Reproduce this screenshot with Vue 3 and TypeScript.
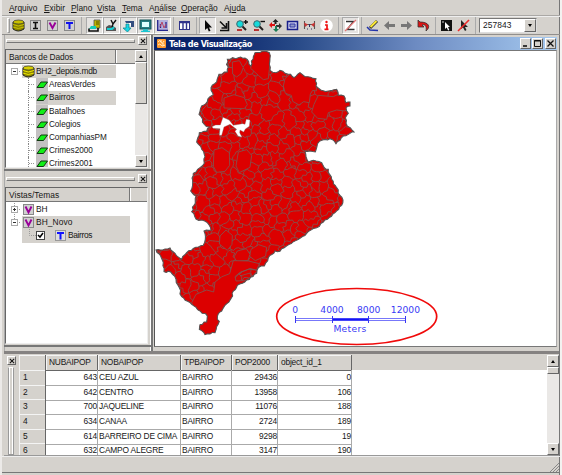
<script setup lang="ts">
type Pt = [number, number]

const menus = [
  ['', 'A', 'rquivo'], ['', 'E', 'xibir'], ['', 'P', 'lano'], ['', 'V', 'ista'],
  ['', 'T', 'ema'], ['A', 'n', 'álise'], ['', 'O', 'peração'], ['Aj', 'u', 'da'],
]
const groups: string[][] = [
  ['db', 'box-I', 'box-V', 'box-T'],
  ['import', 'themeedit', 'drop', 'monitor', 'chart'],
  ['table'],
  ['cursor', 'resize', 'zoomin', 'zoomout', 'pan', 'extent', 'distance', 'info'],
  ['nozoom'],
  ['pencil', 'left', 'right', 'undo'],
  ['select', 'unselect'],
]
const pressed = ['import', 'themeedit', 'drop', 'monitor', 'chart', 'cursor', 'nozoom']
const letterColor: Record<string, string> = { I: '#111', V: '#909', T: '#11e' }

const layers = ['AreasVerdes', 'Bairros', 'Batalhoes', 'Colegios', 'CompanhiasPM', 'Crimes2000', 'Crimes2001']
const columns = ['NUBAIPOP', 'NOBAIPOP', 'TPBAIPOP', 'POP2000', 'object_id_1']
const records: (string | number)[][] = [
  [643, 'CEU AZUL', 'BAIRRO', 29436, 0],
  [642, 'CENTRO', 'BAIRRO', 13958, 106],
  [700, 'JAQUELINE', 'BAIRRO', 11076, 188],
  [634, 'CANAA', 'BAIRRO', 2724, 189],
  [614, 'BARREIRO DE CIMA', 'BAIRRO', 9298, 19],
  [632, 'CAMPO ALEGRE', 'BAIRRO', 3147, 190],
]

// City boundary, three units per screen pixel
const outline: Pt[] = [
  [315, 50], [345, 45], [358, 50], [358, 85], [360, 103], [378, 110], [390, 103], [405, 112], [422, 115], [432, 125], [450, 110], [465, 122], [498, 128], [498, 150], [512, 162], [535, 165], [560, 160], [565, 178], [582, 180], [588, 200], [600, 198], [600, 210], [588, 215], [595, 232], [586, 245], [588, 262], [612, 288], [600, 292], [580, 300], [558, 323], [540, 308], [508, 316], [496, 348], [465, 346], [475, 378], [490, 373], [515, 380], [523, 395], [535, 400], [545, 430], [560, 455],
  [570, 478], [579, 492], [575, 508], [555, 530], [520, 558], [500, 575], [470, 592], [430, 617], [395, 638], [390, 646], [375, 645], [355, 665], [343, 690], [325, 695], [320, 712], [290, 732], [262, 748], [250, 765], [248, 780], [225, 808], [215, 825], [205, 833], [202, 850], [208, 856], [200, 872], [195, 890], [165, 896], [148, 880], [150, 866], [170, 858], [172, 840], [150, 825], [125, 805], [95, 782], [88, 755], [78, 730], [62, 708], [42, 707], [40, 680], [32, 660], [18, 642], [38, 642], [60, 636], [75, 652], [95, 670], [110, 650], [130, 637], [160, 628], [166, 610], [162, 585], [183, 583], [172, 560], [138, 549], [125, 527], [132, 508], [138, 480], [122, 465], [128, 440], [130, 412], [150, 395], [163, 382], [165, 362], [155, 340], [140, 318], [148, 290], [170, 286], [178, 273], [163, 265], [147, 235], [155, 210], [172, 197], [180, 182], [190, 176], [183, 155], [200, 138], [207, 115], [232, 108], [232, 70], [265, 65], [285, 66], [303, 90], [310, 62],
]
const lagoon = 'M186 272 197 267 211 267 219 244 237 252 250 268 278 263 285 265 289 250 300 252 298 271 286 279 281 288 270 282 269 290 276 304 264 300 255 286 260 280 240 265 222 273 215 298 208 298 210 278 189 277Z'
// Districts much larger than their neighbours
const large = [
  'M405 128 435 100 500 115 499 165 488 163 481 174 478 200 461 197 447 207 428 196 424 178 406 172 400 150Z',
  'M308 40 365 40 358 100 355 128 340 131 325 118 302 97Z',
  'M247 78 268 74 280 95 273 113 260 123 248 114Z',
  'M505 178 550 182 575 170 610 200 585 225 560 222 535 230 530 250 503 247 485 228 492 205Z',
  'M222 186 252 176 283 185 292 206 283 218 222 216Z',
  'M192 342 216 335 238 350 239 388 225 406 200 409 190 391Z',
  'M265 348 290 341 305 358 300 394 268 410 258 390Z',
  'M210 600 228 582 247 598 246 625 232 643 208 624Z',
  'M303 640 326 626 350 634 347 660 316 674 299 661Z',
  'M262 645 289 638 300 655 294 673 260 676 252 663Z',
  'M250 674 295 675 328 683 320 702 300 698 270 709 255 722 258 735 285 734 300 725 275 780 225 900 140 910 145 850 125 800 138 775 170 762 191 768 195 738 216 722 239 713Z',
]

function noise(x: number, y: number): number {
  const v = Math.sin(x * 12.9898 + y * 78.233) * 43758.5453
  return v - Math.floor(v)
}
function order(a: Pt, b: Pt): boolean {
  return a[0] < b[0] || (a[0] === b[0] && a[1] < b[1])
}
function rough(a: Pt, b: Pt, amount: number): string {
  const flip = !order(a, b)
  const [p, q] = flip ? [b, a] : [a, b]
  const len = Math.hypot(q[0] - p[0], q[1] - p[1])
  const n = Math.max(1, Math.round(len / 8))
  const out: string[] = []
  for (let i = 1; i < n; i++) {
    const t = i / n
    const x = p[0] + (q[0] - p[0]) * t
    const y = p[1] + (q[1] - p[1]) * t
    const k = (noise(Math.round(x), Math.round(y)) - 0.5) * amount
    out.push(`${(x - ((q[1] - p[1]) / len) * k).toFixed(1)} ${(y + ((q[0] - p[0]) / len) * k).toFixed(1)}`)
  }
  if (flip) out.reverse()
  return out.join(' ')
}
const border = 'M' + outline.map((p, i) => `${p.join(' ')} ${rough(p, outline[(i + 1) % outline.length], 6)}`).join(' ') + 'Z'

function seeds(): Pt[] {
  const pts: Pt[] = []
  for (let gy = 0; gy < 34; gy++) {
    for (let gx = 0; gx < 22; gx++) {
      const px = 5 + gx * 30 + noise(gx + 1, gy + 3) * 29
      const py = 40 + gy * 26 + noise(gx + 7, gy + 11) * 25
      const sparse = py < 240 ? 0.3 : py > 620 ? 0.15 : 0.06
      if (noise(gx + 31, gy + 17) < sparse) continue
      pts.push([px, py])
    }
  }
  return pts
}
function districts(): string {
  const pts = seeds()
  let d = ''
  for (const s of pts) {
    let cell: Pt[] = [[-50, -50], [700, -50], [700, 950], [-50, 950]]
    for (const o of pts) {
      if (o === s) continue
      const nx = o[0] - s[0]
      const ny = o[1] - s[1]
      const c = (nx * (o[0] + s[0]) + ny * (o[1] + s[1])) / 2
      const next: Pt[] = []
      cell.forEach((a, i) => {
        const b = cell[(i + 1) % cell.length]
        const da = a[0] * nx + a[1] * ny - c
        const db = b[0] * nx + b[1] * ny - c
        if (da <= 0) next.push(a)
        if (da * db < 0) {
          const t = da / (da - db)
          next.push([a[0] + (b[0] - a[0]) * t, a[1] + (b[1] - a[1]) * t])
        }
      })
      cell = next
    }
    cell.forEach((a, i) => {
      const b = cell[(i + 1) % cell.length]
      if (order(a, b)) d += `M${a[0].toFixed(1)} ${a[1].toFixed(1)} ${rough(a, b, 12)} ${b[0].toFixed(1)} ${b[1].toFixed(1)}`
    })
  }
  return d
}
const boundaries = districts()
const bars = [0, 4000, 8000, 12000]
</script>

<template>
  <div class="app">
    <nav class="menu">
      <span v-for="m in menus" :key="m.join('')">{{ m[0] }}<u>{{ m[1] }}</u>{{ m[2] }}</span>
    </nav>

    <div class="toolbar">
      <i class="handle"></i>
      <div v-for="(g, gi) in groups" :key="gi" class="group" :class="'g' + gi">
        <span v-for="n in g" :key="n" class="tool" :class="{ pressed: pressed.includes(n) }">
          <svg viewBox="0 0 13 13" width="13" height="13">
            <g v-if="n === 'db'">
              <path d="M1 3v7q5 4 11 0V3z" fill="#8b8500" stroke="#222" />
              <ellipse cx="6.5" cy="3" rx="5.3" ry="2" fill="#c8c000" stroke="#333" stroke-width=".7" />
              <path d="M1 5.5q5 3 11 0M1 8q5 3 11 0" stroke="#c9c100" fill="none" />
            </g>
            <g v-else-if="n.startsWith('box-')">
              <rect x="1.5" y="1.5" width="10" height="10" fill="#d0d0d0" stroke="#888" />
              <path v-if="n === 'box-I'" d="M4 3.5h5M6.5 3.5v6M4 9.5h5" :stroke="letterColor.I" stroke-width="1.6" fill="none" />
              <path v-else-if="n === 'box-V'" d="M3.5 3.5 6.5 9 9.5 3.5" :stroke="letterColor.V" stroke-width="1.9" fill="none" />
              <path v-else d="M3 4h7M6.5 4v6" :stroke="letterColor.T" stroke-width="2" fill="none" />
            </g>
            <g v-else-if="n === 'import'">
              <path d="M6 1h6v8H6z" fill="#bdb500" stroke="#555" stroke-width=".8" /><path d="M8 3h3M8 5h3" stroke="#554f00" />
              <path d="M3 7h5v3H1z" fill="#16cdb8" /><path d="M1 9.5V12h9V9" stroke="#111" stroke-width="1.6" fill="none" />
            </g>
            <g v-else-if="n === 'themeedit'">
              <path d="M1 8l3-2 4 1 3 2v3H1z" fill="#555" /><path d="M2 10h5l2-2" stroke="#16cdd0" stroke-width="2" fill="none" />
              <path d="M6 1l2 4 3-4M8 5l-1 3" stroke="#111" stroke-width="1.4" fill="none" />
            </g>
            <g v-else-if="n === 'drop'">
              <path d="M3 2h9v6H9V4H4z" fill="#334f80" /><path d="M5 4h4v3H5z" fill="#fff" /><path d="M4 5h3v4h2l-3.500 4L1 9h3z" fill="#19d5e5" stroke="#07818b" stroke-width=".7" />
            </g>
            <g v-else-if="n === 'monitor'">
              <rect x="1" y="1" width="11" height="9" fill="#267f83" stroke="#145557" /><rect x="3" y="3" width="7" height="5" fill="#dff" /><path d="M4 11h5M2 12.500h9" stroke="#1dc5d0" stroke-width="1.5" />
            </g>
            <g v-else-if="n === 'chart'">
              <rect x="1" y="1" width="11" height="11" fill="#b2b2dc" /><path d="M1.700 1v10.300H12M4.500 9V5M10 9V3" stroke="#25258d" stroke-width="1.3" fill="none" /><path d="M4 8l2-5 2 6 2-4" stroke="#b64666" fill="none" />
            </g>
            <g v-else-if="n === 'table'">
              <rect x="1.500" y="2.500" width="10" height="8" fill="#fff" stroke="#30348b" /><path d="M1 3.500h11M5 3v8M8.500 3v8" stroke="#30348b" stroke-width="1.4" />
            </g>
            <path v-else-if="n === 'cursor'" d="M4 1v10l2.300-2 1.500 3.500 1.700-.7L8 8.500h3z" fill="#080808" />
            <path v-else-if="n === 'resize'" d="M2 2.500l7 7M10.500 2v9.500H2M8.500 4v5h-5" stroke="#111" stroke-width="1.600" fill="none" />
            <g v-else-if="n === 'zoomin' || n === 'zoomout'">
              <path d="M7 7l4 4" stroke="#222" stroke-width="2" /><circle cx="5" cy="5" r="3.300" fill="#16dada" stroke="#39676d" /><path d="M2 11h5" stroke="#b52222" stroke-width="1.800" />
              <path :d="n === 'zoomin' ? 'M8.500 3H13M10.700 1v4' : 'M8.500 2.500H13'" stroke="#111" stroke-width="1.400" />
            </g>
            <g v-else-if="n === 'pan'">
              <path d="M6.500 0l3 3H7.500v2h-2V3h-2z" fill="#222" /><path d="M0 6l3-3v2h3v2H3v2z" fill="#d11" /><path d="M13 7l-3-3v2H7v2h3v2z" fill="#333" /><path d="M7 13l-3-3h2V7h2v3h2z" fill="#187c55" />
            </g>
            <g v-else-if="n === 'extent'"><rect x="1.500" y="2.500" width="10" height="8" fill="#c7cae9" stroke="#181f8b" stroke-width="1.500" /><path d="M4 5h5v3H4z" stroke="#3037a6" fill="#929ac7" /></g>
            <g v-else-if="n === 'distance'"><path d="M1.500 2v8M11.500 2v8M2 5.500h9" stroke="#555" stroke-width="1.100" /><path d="M1 3.500l4 2-3 2.500zM12 3.500l-4 2 3 2.500z" fill="#c33" /><path d="M6.500 5v3M4 10h1M8 10h1" stroke="#336" /></g>
            <g v-else-if="n === 'info'"><circle cx="6.500" cy="6.500" r="6.300" fill="#fff" /><path d="M5 6h2v4M4.500 10.300h4" stroke="#e11" stroke-width="1.700" fill="none" /><circle cx="6.500" cy="3" r="1.200" fill="#e11" /></g>
            <g v-else-if="n === 'nozoom'"><rect x="1" y="1" width="11" height="11" fill="#fff" /><path d="M2 2.500h7.500L3 10.500h7.500" stroke="#333" fill="none" stroke-width="1.300" /><path d="M12 1L1 12" stroke="#e47777" stroke-width="1.300" /></g>
            <g v-else-if="n === 'pencil'"><path d="M1 8l3 3 8 .500" stroke="#2233aa" fill="none" stroke-width="1.500" /><path d="M4 9l7-7" stroke="#333" stroke-width="3" /><path d="M4.500 8l6-6" stroke="#fbe831" stroke-width="2" /></g>
            <path v-else-if="n === 'left'" d="M1 6.500L6 2v3h6v3H6v3z" fill="#777" />
            <path v-else-if="n === 'right'" d="M12 6.500L7 2v3H1v3h6v3z" fill="#777" />
            <path v-else-if="n === 'undo'" d="M1 1v7h6L5 6c3-1 5 1 4 6 5-4 3-9-6-9z" fill="#df1515" stroke="#333" stroke-width=".8" />
            <g v-else-if="n === 'select'"><rect x="1" y="1" width="11" height="11" fill="#111" /><path d="M5 3v7l1.700-1.500 1.400 3 1.200-.500L8 8h2z" fill="#fff" /><path d="M2 3h2" stroke="#ccc" /></g>
            <g v-else><path d="M4 1v9l2-1.500L8 12l1.500-1L8 8h3z" fill="#222" /><path d="M12 1L1 12" stroke="#ed2b2b" stroke-width="1.600" /></g>
          </svg>
        </span>
      </div>
      <div class="combo"><span>257843</span><b class="btn"><i class="down"></i></b></div>
    </div>

    <div class="main">
      <aside>
        <section class="dock dock1">
          <div class="dockbar"><i></i><b class="btn close"><svg viewBox="0 0 7 7"><path d="M1 1l5 5M6 1L1 6" /></svg></b></div>
          <div class="list">
            <div class="content">
              <div class="head"><span>Bancos de Dados</span></div>
              <div class="tree">
                <div class="row root">
                  <svg width="14" height="13" viewBox="0 0 14 13"><path d="M9 6.500h4" stroke="#999" stroke-dasharray="1 1" /><rect x="3.500" y="3.500" width="6" height="6" fill="#fff" stroke="#aaa" /><path d="M5 6.500h3" stroke="#333" /></svg>
                  <span class="sel"><svg width="13" height="13" viewBox="0 0 13 13"><path d="M1 3v7q5 4 11 0V3z" fill="#8b8500" stroke="#222" /><ellipse cx="6.500" cy="3" rx="5.300" ry="2" fill="#d7cf00" stroke="#333" stroke-width=".7" /><path d="M1 5.500q5 3 11 0M1 8q5 3 11 0" stroke="#eee500" fill="none" /></svg>BH2_depois.mdb</span>
                </div>
                <div v-for="l in layers" :key="l" class="row leaf">
                  <i class="branch"></i>
                  <span :class="{ sel: l === 'Bairros' }"><svg width="13" height="13" viewBox="0 0 13 13"><path d="M0 0h12v13H0z" fill="#c4c2c2" /><path d="M1 9.500L5 4h6.500l-4 5.500z" fill="#10ef16" stroke="#123912" /></svg>{{ l }}</span>
                </div>
              </div>
            </div>
            <div class="scroll"><b class="btn"><i class="up"></i></b><b class="btn thumb"></b><s></s><b class="btn"><i class="down"></i></b></div>
          </div>
        </section>
        <section class="dock dock2">
          <div class="dockbar"><i></i><b class="btn close"><svg viewBox="0 0 7 7"><path d="M1 1l5 5M6 1L1 6" /></svg></b></div>
          <div class="list">
            <div class="content">
              <div class="head"><span>Vistas/Temas</span></div>
              <div class="tree views">
                <div v-for="(v, i) in ['BH', 'BH_Novo']" :key="v" class="row root">
                  <svg width="14" height="13" viewBox="0 0 14 13"><path :d="i ? 'M6.500 0v3' : 'M6.500 0v3M6.500 9v4'" stroke="#999" stroke-dasharray="1 1" /><path d="M9 6.500h4" stroke="#999" stroke-dasharray="1 1" /><rect x="3.500" y="3.500" width="6" height="6" fill="#fff" stroke="#aaa" /><path :d="i ? 'M5 6.500h3' : 'M5 6.500h3M6.500 5v3'" stroke="#333" /></svg>
                  <span :class="{ sel: i === 1 }"><svg width="13" height="13" viewBox="0 0 13 13"><rect x="1.500" y="1.500" width="10" height="10" fill="#d0d0d0" stroke="#888" /><path d="M3.500 3.500L6.500 9.500l3-6" stroke="#909" stroke-width="1.900" fill="none" /></svg>{{ v }}</span>
                </div>
                <div class="row theme">
                  <span class="sel"><svg width="17" height="13" viewBox="0 0 17 13"><path d="M7.500 0v6.500H14" fill="none" stroke="#999" stroke-dasharray="1 1" /></svg>
                    <svg class="check" width="9" height="9" viewBox="0 0 9 9"><rect x=".5" y=".5" width="8" height="8" fill="#fff" stroke="#444" /><path d="M2 4l2 2 3-4" stroke="#000" stroke-width="1.500" fill="none" /></svg>
                    <svg width="13" height="13" viewBox="0 0 13 13"><rect x="1.500" y="1.500" width="10" height="10" fill="#ddd" stroke="#999" /><path d="M3 4h7M6.500 4v6.500" stroke="#11f" stroke-width="2" /></svg>Bairros</span>
                </div>
              </div>
            </div>
          </div>
        </section>
      </aside>

      <section class="window">
        <header>
          <svg width="9" height="9" viewBox="0 0 9 9"><rect width="9" height="9" rx="1" fill="#ff9a2e" /><path d="M1 3q2-3 3 0t3-1M1 6q2-2 3 0t4 0M4 1v2M6 4v3" stroke="#fff0c8" fill="none" /></svg>
          <h1>Tela de Visualização</h1>
          <b class="btn"><svg viewBox="0 0 9 9"><path d="M2 7h4" stroke-width="1.600" /></svg></b>
          <b class="btn"><svg viewBox="0 0 9 9"><path d="M1.500 7.500v-6h6v6zM1 2h7" /></svg></b>
          <b class="btn last"><svg viewBox="0 0 9 9"><path d="M1.500 1.500l6 6M7.500 1.500l-6 6" stroke-width="1.300" /></svg></b>
        </header>
        <div class="canvas">
          <svg width="401" height="295" viewBox="155 51 401 295">
            <clipPath id="city"><path :d="border" /></clipPath>
            <g transform="translate(150 36) scale(.33333)">
              <path :d="border" fill="#dc0000" />
              <g clip-path="url(#city)">
                <path :d="boundaries" fill="none" stroke="#7a5c58" stroke-width="2.300" />
                <path v-for="p in large" :key="p" :d="p" fill="#dc0000" stroke="#7a5c58" stroke-width="2.300" />
                <path d="M255 725 272 709 300 698 322 704M270 720 300 711 303 721" fill="none" stroke="#7a5c58" stroke-width="2.300" />
              </g>
              <path :d="border" fill="none" stroke="#555" stroke-width="3.200" />
              <path :d="lagoon" fill="#fff" stroke="#777" stroke-width="1" />
            </g>
            <ellipse cx="356.700" cy="316.500" rx="80" ry="28" fill="none" stroke="#f00a0a" stroke-width="1.700" />
            <g class="scale">
              <path d="M295 318.500h111M295 320.500h111" stroke="#7777fa" /><path d="M332 319.500h37" stroke="#1515f5" stroke-width="2" />
              <path d="M295.500 316v7M332.500 316v7M368.500 316v7M405.500 316v7" stroke="#3838f4" />
              <text v-for="(b, i) in bars" :key="b" :x="295.300 + i * 36.700" y="313">{{ b }}</text>
              <text x="350" y="332" class="unit">Meters</text>
            </g>
          </svg>
        </div>
      </section>
    </div>

    <div class="bottom">
      <div class="vbar"><b class="btn close"><svg viewBox="0 0 7 7"><path d="M1 1l5 5M6 1L1 6" /></svg></b><i></i></div>
      <div class="gridbox">
        <div class="record header"><span></span><span v-for="c in columns" :key="c">{{ c }}</span><span></span></div>
        <div v-for="(r, i) in records" :key="i" class="record">
          <span class="num">{{ i + 1 }}</span><span v-for="(c, j) in r" :key="j" :class="{ right: typeof c === 'number' }">{{ c }}</span>
        </div>
      </div>
      <div class="scroll"><b class="btn"><i class="up"></i></b><b class="btn thumb"></b><s></s><b class="btn"><i class="down"></i></b></div>
    </div>
    <footer><svg width="10" height="10" viewBox="0 0 10 10"><path d="M1 10l9-9M4 10l6-6M7 10l3-3" stroke="#888" /></svg></footer>
  </div>
</template>

<style>
body { background: #f4f3f2; overflow: hidden; }
</style>
<style scoped>
* { box-sizing: border-box; }
.app { width: 562px; height: 475px; background: #d5d2cd; border-left: 2px solid #eceae8; border-right: 2px solid #f3f2f0; display: flex; flex-direction: column; font: 8.4px/13px "Liberation Sans", Arial, sans-serif; color: #171717; box-shadow: inset -1px 0 #777; }
svg { display: block; flex: none; }
.menu { height: 16px; padding-left: 7px; display: grid; grid-template-columns: 35px 27px 26px 25px 27px 32px 43px 40px; line-height: 16px; border-bottom: 1px solid #aaa8a5; white-space: nowrap; }
.menu u { text-underline-offset: 1px; text-decoration-thickness: 1px; }
.toolbar { height: 19px; display: flex; align-items: center; padding-left: 5px; border-bottom: 1px solid #918f8d; box-shadow: inset 0 1px #eee; }
.handle { width: 3px; height: 15px; border: 1px solid; border-color: #fff #999 #999 #fff; }
.group { display: flex; height: 17px; align-items: center; padding-right: 3px; margin-right: 3px; border-right: 1px solid #aaa; }
.g0 { margin-right: 4px; }
.g1 { margin-right: 2px; padding-right: 2px; }
.g2 { margin-right: 2px; }
.g4 { margin-right: 2px; padding-right: 2px; }
.g5 { margin-right: 2px; }
.tool { width: 17px; height: 17px; display: flex; align-items: center; justify-content: center; }
.pressed { background: #e5e3e1; border: 1px solid; border-color: #aaa #fff #fff #aaa; }
.combo { width: 58px; height: 15px; background: #fff; border: 1px solid #777; border-right-color: #ddd; border-bottom-color: #ddd; display: flex; padding-left: 3px; line-height: 13px; letter-spacing: .1px; }
.combo span { flex: 1; }
.btn { display: flex; align-items: center; justify-content: center; background: #d5d2cd; border: 1px solid; border-color: #fff #666 #666 #fff; flex: none; }
.combo .btn { width: 12px; height: 13px; }
.up, .down { width: 0; height: 0; border: 2.500px solid transparent; }
.up { border-top: 0; border-bottom: 3px solid #000; }
.down { border-bottom: 0; border-top: 3px solid #000; }
.main { height: 316px; display: flex; padding-left: 2px; }
aside { width: 149px; border-right: 2px solid #777; box-shadow: inset 1px 0 #aaa, inset -1px 0 #fff; }
.dock { padding: 0 3px 0 1px; border-bottom: 2px solid #777; }
.dock1 { height: 136px; }
.dock2 { height: 176px; padding-top: 2px; }
.dockbar { display: flex; height: 14px; padding-left: 1px; align-items: flex-start; }
.dockbar > i { width: 129px; height: 4px; margin: 4px 3px 0 0; border: 1px solid; border-color: #fff #888 #777 #fff; }
.close { width: 9px; height: 9px; margin-top: 1px; }
.close svg { width: 6px; height: 6px; stroke: #111; fill: none; stroke-width: 1.200; }
.list { display: flex; background: #fff; border: 1px solid; border-color: #666 #eee #eee #666; overflow: hidden; }
.dock1 .list { height: 119px; }
.dock2 .list { height: 157px; }
.content { flex: 1; min-width: 0; }
.head { height: 14px; background: #d5d2cd; border-bottom: 1px solid #777; padding-left: 3px; white-space: nowrap; line-height: 15px; }
.head span { display: block; height: 13px; width: 107px; border-right: 1px solid #777; box-shadow: 1px 0 #fff; letter-spacing: -.13px; }
.dock2 .head span { width: 121px; letter-spacing: .05px; }
.tree { width: 110px; padding-top: 1px; }
.views { width: 124px; padding-top: 1px; }
.row { height: 13.200px; line-height: 13px; display: flex; white-space: nowrap; }
.root { padding-left: 2px; }
.row > span { flex: 1; display: flex; align-items: center; gap: 1px; }
.sel { background: #d5d2cd; }
.root .sel { letter-spacing: -.23px; }
.views .root .sel { letter-spacing: .1px; }
.leaf .branch { width: 6px; margin: 0 2px 0 22px; border-left: 1px dotted #888; background: linear-gradient(90deg, #999 50%, transparent 50%) 0 6px / 2px 1px repeat-x; }
.leaf { font-size: 8.200px; }
.leaf svg { margin-right: -1px; }
.leaf > span { letter-spacing: -.05px; }
.theme { padding-left: 16px; }
.theme .check { margin: 0 8px 0 -4px; }
.theme > span { letter-spacing: -.35px; }
.scroll { width: 12px; background: #eae8e6; display: flex; flex-direction: column; flex: none; }
.scroll .btn { height: 12px; }
.scroll .thumb { height: 42px; }
.scroll s { flex: 1; }
.window { flex: 1; margin-left: 1px; padding-right: 3px; }
.window header { height: 13px; margin-top: 2px; display: flex; align-items: center; padding-left: 3px; background: linear-gradient(90deg, #0a246a 15%, #274987 35%, #6d8bc2 65%, #a6caf0); }
h1 { flex: 1; margin: 0 0 0 3px; font: bold 8.100px/12px "DejaVu Sans", sans-serif; letter-spacing: -.43px; color: #fff; }
header .btn { width: 11px; height: 11px; margin-right: 1px; }
header .btn svg { width: 9px; height: 9px; stroke: #111; fill: none; }
.last { margin-left: 1px; }
.canvas { height: 297px; background: #fff; border: 1px solid; border-color: #777 #aaa #777 #555; overflow: hidden; }
.scale { fill: none; }
.scale text { font: 9.200px "DejaVu Sans", sans-serif; fill: #3939f5; text-anchor: middle; }
.scale .unit { letter-spacing: .3px; }
.bottom { height: 105px; display: flex; margin: 0 1px 0 2px; border-top: 3px solid #858281; border-bottom: 1px solid #999; padding-top: 1px; }
.vbar { width: 15px; padding: 0 0 0 3px; }
.vbar i { display: block; width: 6px; height: 88px; margin: 2px 0 0 1px; border: 1px solid; border-color: #fff #999 #999; box-shadow: inset 1px 0 #fff, inset -1px 0 #fff; }
.gridbox { flex: 1; background: #fff; overflow: hidden; box-shadow: inset 1px 0 #555; }
.record { height: 14.650px; display: grid; grid-template-columns: 27px 52px 83px 51px 46px 74px; line-height: 15px; }
.record > span { border-right: 1px solid #aaa; border-bottom: 1px solid #aaa; padding-left: 1px; white-space: nowrap; letter-spacing: -.17px; }
.record.header { height: 15px; background: #d5d2cd; grid-template-columns: 27px 52px 83px 51px 46px 74px 1fr; }
.header > span { border-color: #666; padding-left: 3px; box-shadow: inset 1px 1px #f4f4f4; letter-spacing: -.2px; }
.header > span:last-child { border: 0; box-shadow: none; }
.record .num { background: #d5d2cd; border-color: #666; padding-left: 4px; box-shadow: inset 1px 1px #f4f4f4; }
.record .right { text-align: right; padding-right: 0; }
.bottom .thumb { height: 7px; }
footer { height: 17px; border-bottom: 1px solid #777; box-shadow: inset 0 1px #eee; display: flex; justify-content: flex-end; align-items: flex-end; padding-right: 1px; }
</style>
